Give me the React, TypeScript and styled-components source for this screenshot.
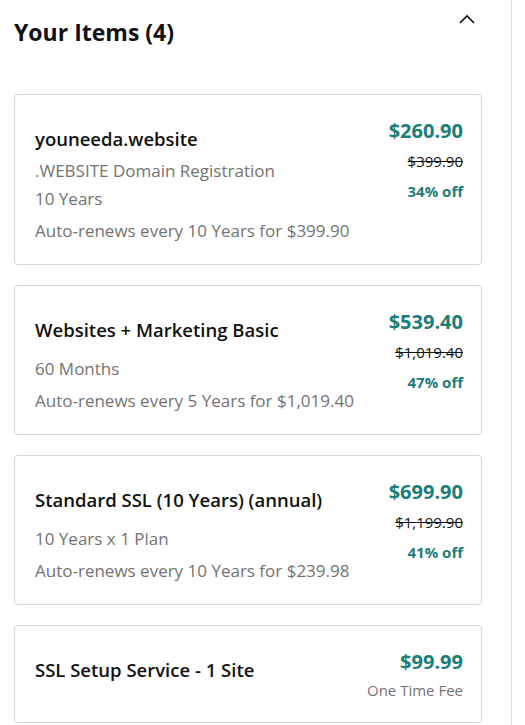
import React from "react";
import styled, { createGlobalStyle } from "styled-components";

const GlobalStyle = createGlobalStyle`
  html, body {
    margin: 0;
    padding: 0;
    background: #fff;
  }
  body {
    font-family: "Open Sans", "Liberation Sans", Arial, sans-serif;
    color: #111;
  }
`;

const Panel = styled.div`
  width: 512px;
  min-height: 100vh;
  box-sizing: border-box;
  border-right: 1px solid #dcdcdc;
  padding: 0 29px 0 14px;
`;

const Header = styled.div`
  display: flex;
  align-items: flex-start;
  justify-content: space-between;
  height: 94px;
`;

const Title = styled.h2`
  margin: 16px 0 0;
  font-size: 23px;
  line-height: 32px;
  font-weight: 700;
  color: #111;
`;

const Toggle = styled.button`
  border: 0;
  background: none;
  padding: 0;
  margin: 12px 6px 0 0;
  width: 18px;
  height: 14px;
  display: flex;
  align-items: center;
  justify-content: center;
  cursor: pointer;
`;

const List = styled.div`
  display: flex;
  flex-direction: column;
  gap: 20px;
`;

const Card = styled.div`
  border: 1px solid #d6d6d6;
  border-radius: 4px;
  padding: 21px 18px 19px 20px;
  display: flex;
  justify-content: space-between;
  align-items: flex-start;
`;

const Info = styled.div`
  display: flex;
  flex-direction: column;
  padding-top: 9px;
`;

const Name = styled.div`
  font-size: 18.5px;
  line-height: 28px;
  font-weight: 600;
  color: #111;
`;

const Detail = styled.div<{ $gap?: number }>`
  font-size: 17px;
  line-height: 28px;
  color: #737373;
  margin-top: ${(p) => p.$gap ?? 0}px;
`;

const Pricing = styled.div`
  display: flex;
  flex-direction: column;
  align-items: flex-end;
  text-align: right;
`;

const Price = styled.div`
  font-size: 20px;
  line-height: 30px;
  font-weight: 700;
  color: #1b7d78;
`;

const ListPrice = styled.div`
  font-size: 15px;
  line-height: 30px;
  color: #111;
  text-decoration: line-through;
`;

const Discount = styled.div`
  font-size: 15px;
  line-height: 30px;
  font-weight: 700;
  color: #1b7d78;
`;

const Fee = styled.div`
  font-size: 15px;
  line-height: 26px;
  color: #737373;
`;

type Item = {
  name: string;
  subtitle?: string;
  term?: string;
  renew?: string;
  price: string;
  list?: string;
  off?: string;
  fee?: string;
};

const items: Item[] = [
  {
    name: "youneeda.website",
    subtitle: ".WEBSITE Domain Registration",
    term: "10 Years",
    renew: "Auto-renews every 10 Years for $399.90",
    price: "$260.90",
    list: "$399.90",
    off: "34% off",
  },
  {
    name: "Websites + Marketing Basic",
    term: "60 Months",
    renew: "Auto-renews every 5 Years for $1,019.40",
    price: "$539.40",
    list: "$1,019.40",
    off: "47% off",
  },
  {
    name: "Standard SSL (10 Years) (annual)",
    term: "10 Years x 1 Plan",
    renew: "Auto-renews every 10 Years for $239.98",
    price: "$699.90",
    list: "$1,199.90",
    off: "41% off",
  },
  {
    name: "SSL Setup Service - 1 Site",
    price: "$99.99",
    fee: "One Time Fee",
  },
];

function ItemCard({ item }: { item: Item }) {
  return (
    <Card>
      <Info>
        <Name>{item.name}</Name>
        {item.subtitle && <Detail $gap={4}>{item.subtitle}</Detail>}
        {item.term && <Detail $gap={item.subtitle ? 0 : 11}>{item.term}</Detail>}
        {item.renew && <Detail $gap={4}>{item.renew}</Detail>}
      </Info>
      <Pricing>
        <Price>{item.price}</Price>
        {item.list && <ListPrice>{item.list}</ListPrice>}
        {item.off && <Discount>{item.off}</Discount>}
        {item.fee && <Fee>{item.fee}</Fee>}
      </Pricing>
    </Card>
  );
}

export default function App() {
  return (
    <>
      <GlobalStyle />
      <Panel>
        <Header>
          <Title>Your Items (4)</Title>
          <Toggle aria-label="Collapse">
            <svg width="16" height="10" viewBox="0 0 16 10" fill="none">
              <path d="M1 9L8 2l7 7" stroke="#111" strokeWidth="1.6" />
            </svg>
          </Toggle>
        </Header>
        <List>
          {items.map((item) => (
            <ItemCard key={item.name} item={item} />
          ))}
        </List>
      </Panel>
    </>
  );
}
